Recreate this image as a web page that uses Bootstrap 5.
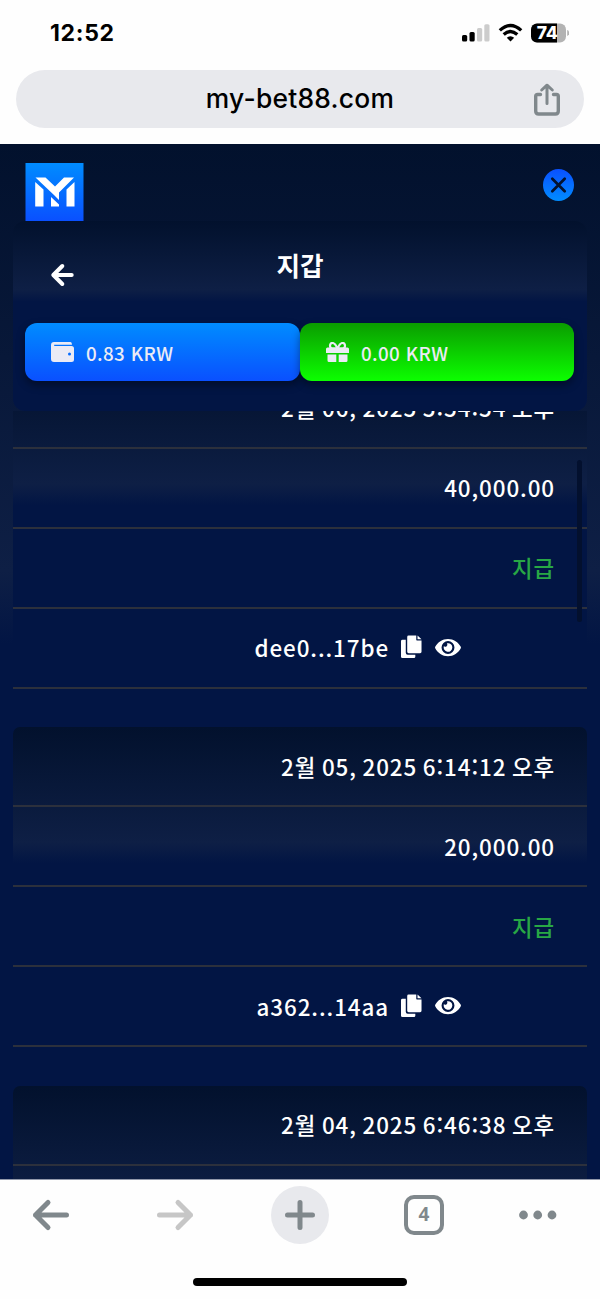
<!DOCTYPE html>
<html lang="ko">
<head>
<meta charset="utf-8">
<meta name="viewport" content="width=device-width, initial-scale=1">
<title>지갑</title>
<link href="https://cdn.jsdelivr.net/npm/bootstrap@5.3.0/dist/css/bootstrap.min.css" rel="stylesheet">
<style>
  body { width: 600px; height: 1299px; overflow: hidden; background: #fefefe; font-family: "Noto Sans CJK KR", sans-serif; color: #fff; }
  svg { display: block; flex: none; }
  .status-bar { height: 70px; padding: 0 31px 4px 50px; color: #000; font-family: Inter, sans-serif; }
  .clock { font-size: 23px; font-weight: 700; letter-spacing: .7px; line-height: 1; }
  .address { height: 58px; margin: 0 16px; background: #e8e9ed; color: #000; font: 500 26.4px/57px Inter, sans-serif; letter-spacing: .25px; }
  .address .share { right: 22px; top: 13px; }
  .site { height: 1035px; margin-top: 16px; background: linear-gradient(#02112d 0, #0e1f45 427px, #021544 500px); }
  .site-top { height: 77px; padding: 19px 26px 0 25px; }
  .close-icon { margin-top: 6px; }
  .panel { background: linear-gradient(#02112d 0, #0e1f45 36%, #021544 42.5%); }
  .wallet-head { height: 190px; margin: 0 13px; border-radius: 12px; padding: 0 12px; }
  .wallet-title { height: 102px; }
  .wallet-title .back { left: 25px; top: 42px; }
  .wallet-title h1 { font-size: 25.6px; font-weight: 700; line-height: 36px; padding-top: 26px; margin: 0; }
  .pill { height: 58px; border-radius: 12px; padding-left: 26px; gap: 12px; font-size: 18.8px; font-weight: 500; letter-spacing: .35px; color: #ebebf5; box-shadow: 0 4px 8px rgba(0,0,0,.4); }
  .pill span { padding-top: 2px; }
  .pill-main { width: 275px; background: linear-gradient(#008cff, #0a50ff); }
  .pill-bonus { width: 274px; background: linear-gradient(#0a9c00, #0cff00); }
  .records { height: 768px; margin: 0 13px; }
  .record { height: 320px; margin-bottom: 38.4px; border-radius: 7px 7px 0 0; font-size: 22.4px; font-weight: 500; letter-spacing: .9px; word-spacing: -1.5px; font-feature-settings: "calt" 1; }
  .record:first-child { margin-top: -42.2px; }
  .record > div { height: 80px; border-bottom: 2px solid #2c303c; padding: 0 32px 1px 0; line-height: 1; }
  .record .hash { padding-right: 126px; gap: 13px; }
  .hash span { margin-right: -1px; }
  .paid { color: #28a745; }
  .thumb { width: 5px; height: 162px; right: 5px; top: 49px; background: #03102e; }
  .tools { height: 120px; border-top: 1px solid #9299ab; }
  .tool-row { height: 69px; padding-left: 31px; gap: 75px; }
  .tool-row .forward { margin: 0 1px 0 9px; }
  .plus { width: 58px; height: 58px; background: #e8e9ed; }
  .tabs4 { width: 40px; height: 40px; border: 4px solid #80888c; border-radius: 10px; color: #80888c; font: 700 19px/1 "Noto Sans", sans-serif; }
  .home-bar { width: 214px; height: 8px; margin-top: 29px; background: #000; }
</style>
</head>
<body>
<svg width="0" height="0" class="position-absolute">
  <symbol id="copy" viewBox="0 0 22 24"><path fill="#fff" d="M8 0h8v4.500q0 .7.7.7H21.500V17q0 1.500-1.500 1.500H8Q6.500 18.500 6.500 17V1.500Q6.500 0 8 0zM17.300 0l4.200 4h-4.200zM1.500 4.500H5V18q0 2 2 2h8v2.100q0 1.400-1.400 1.400H1.500Q0 23.500 0 22.100V6q0-1.500 1.500-1.500z"/></symbol>
  <symbol id="eye" viewBox="0 0 576 512"><path fill="#fff" d="M572.500 241.400C518.300 135.600 410.900 64 288 64S57.700 135.600 3.500 241.400a32.400 32.400 0 0 0 0 29.200C57.700 376.400 165.100 448 288 448s230.300-71.600 284.500-177.400a32.400 32.400 0 0 0 0-29.200zM288 400a144 144 0 1 1 144-144 143.900 143.900 0 0 1-144 144zm0-240a95.300 95.300 0 0 0-25.300 3.800 47.900 47.900 0 0 1-66.900 66.900A95.800 95.800 0 1 0 288 160z"/></symbol>
</svg>

<header>
  <div class="status-bar d-flex align-items-center justify-content-between">
    <span class="clock">12:52</span>
    <svg width="107" height="20" viewBox="0 0 107 20">
      <rect y="12" width="5.200" height="6.500" rx="1.500"/><rect x="7.500" y="9" width="5.200" height="9.500" rx="1.500"/>
      <rect x="15" y="5" width="5.200" height="13.500" rx="1.500" fill="#ccc"/><rect x="22.300" y="1.300" width="5.200" height="17.200" rx="1.500" fill="#ccc"/>
      <g fill="none" stroke="#000" stroke-width="3.300"><path d="M37.800 7.400Q48.500-2.600 59.200 7.400"/><path d="M41.700 11.500Q48.500 5.400 55.300 11.500"/></g>
      <path d="M44.800 14.700Q48.500 11.700 52.200 14.700L48.500 18.400z"/>
      <clipPath id="batt"><rect x="69" y=".5" width="35" height="19" rx="6"/></clipPath>
      <g clip-path="url(#batt)"><rect x="69" width="35" height="20" fill="#b3b3b3"/><rect x="69" width="26" height="20"/></g>
      <path d="M105.200 7q2 .6 2 3t-2 3z" fill="#b3b3b3"/>
      <text x="74.800" y="16" fill="#fff" font-family="Inter" font-weight="800" font-size="17.500" letter-spacing="-.4">74</text>
    </svg>
  </div>
  <div class="address rounded-pill text-center position-relative">my-bet88.com
    <svg class="share position-absolute" width="30" height="34" viewBox="0 0 30 34" fill="none" stroke="#80888c" stroke-width="3.400" stroke-linecap="round" stroke-linejoin="round"><path d="M8.500 11.500H5.500Q3.700 11.500 3.700 13.300V28Q3.700 31 6.700 31H23.300Q26.300 31 26.300 28V13.300Q26.300 11.500 24.500 11.500H21.500"/><path stroke-width="3" d="M15 20.500V2.500M9.700 7 15 2.200 20.300 7"/></svg>
  </div>
</header>

<main class="site overflow-hidden">
  <div class="site-top d-flex justify-content-between align-items-start">
    <svg width="59" height="58" viewBox="-.5 0 59 58">
      <defs><linearGradient id="logo" x2="0" y2="1"><stop stop-color="#008cff"/><stop offset="1" stop-color="#0a50ff"/></linearGradient></defs>
      <rect width="58" height="58" fill="url(#logo)"/>
      <path fill="#fff" d="M10 14.500H20L29.500 23.500 38.500 14.500H48.500L33.500 29.500V37L29 32.500zM9.700 19 18 26.500V43.500H9.700zM49 19V43.500H41V26.500zM25.500 34 33.500 41.500V43.500H25.500z"/>
    </svg>
    <svg class="close-icon" width="31" height="32" viewBox="0 0 31 32">
      <defs><linearGradient id="close" x2="0" y2="1"><stop stop-color="#0a50ff"/><stop offset="1" stop-color="#008cff"/></linearGradient></defs>
      <ellipse cx="15.500" cy="16" rx="15.500" ry="16" fill="url(#close)"/><path d="M9.300 9.800 21.700 22.200M21.700 9.800 9.300 22.200" stroke="#03122f" stroke-width="2.700" stroke-linecap="round"/>
    </svg>
  </div>

  <section class="wallet-head panel">
    <div class="wallet-title position-relative text-center">
      <svg class="back position-absolute" width="26" height="24" viewBox="0 0 26 24" fill="none" stroke="#fff" stroke-width="4" stroke-linecap="round" stroke-linejoin="round"><path d="M21.700 12H3.500M12.300 3 3.300 12 12.300 21"/></svg>
      <h1>지갑</h1>
    </div>
    <div class="d-flex">
      <div class="pill pill-main d-flex align-items-center">
        <svg width="23" height="20" viewBox="0 0 23 20"><path fill="#ebebf5" fill-rule="evenodd" d="M3 0H19.500Q21 0 21 2.800H3.200V4H20.500Q23 4 23 6.500V17.500Q23 20 20.500 20H3Q0 20 0 17V3Q0 0 3 0zM18.500 10.500a1.500 1.500 0 1 0 0 3 1.500 1.500 0 0 0 0-3z"/></svg>
        <span>0.83 KRW</span>
      </div>
      <div class="pill pill-bonus d-flex align-items-center">
        <svg width="23" height="20" viewBox="0 0 23 20" fill="#ebebf5"><path d="M1.500 5.500H21.500Q23 5.500 23 7V11H0V7Q0 5.500 1.500 5.500zM1.500 12.500H10.300V20H3Q1.500 20 1.500 18.500zM12.700 12.500H21.500V18.500Q21.500 20 20 20H12.700z"/><path fill="none" stroke="#ebebf5" stroke-width="2.200" d="M11.500 6.500Q9 1 6.500 1 4 1 4 3.700 4 6.500 6.500 6.500H16.500Q19 6.500 19 3.700 19 1 16.500 1 14 1 11.500 6.500z"/></svg>
        <span>0.00 KRW</span>
      </div>
    </div>
  </section>

  <section class="records position-relative overflow-hidden">
    <article class="record panel">
      <div class="d-flex align-items-center justify-content-end">2월 06, 2025 5:54:54 오후</div>
      <div class="d-flex align-items-center justify-content-end">40,000.00</div>
      <div class="d-flex align-items-center justify-content-end paid">지급</div>
      <div class="hash d-flex align-items-center justify-content-end"><span>dee0...17be</span><svg width="21" height="24"><use href="#copy"/></svg><svg width="26" height="23"><use href="#eye"/></svg></div>
    </article>
    <article class="record panel">
      <div class="d-flex align-items-center justify-content-end">2월 05, 2025 6:14:12 오후</div>
      <div class="d-flex align-items-center justify-content-end">20,000.00</div>
      <div class="d-flex align-items-center justify-content-end paid">지급</div>
      <div class="hash d-flex align-items-center justify-content-end"><span>a362...14aa</span><svg width="21" height="24"><use href="#copy"/></svg><svg width="26" height="23"><use href="#eye"/></svg></div>
    </article>
    <article class="record panel">
      <div class="d-flex align-items-center justify-content-end">2월 04, 2025 6:46:38 오후</div>
      <div></div>
    </article>
    <span class="thumb position-absolute rounded-pill"></span>
  </section>
</main>

<footer class="tools">
  <div class="tool-row d-flex align-items-center">
    <svg width="40" height="34" viewBox="0 0 40 34" fill="none" stroke="#80888c" stroke-width="5" stroke-linecap="round" stroke-linejoin="round"><path d="M35.500 17H4.500M17 4.500 4.500 17 17 29.500"/></svg>
    <svg class="forward" width="40" height="34" viewBox="0 0 40 34" fill="none" stroke="#c6c6c6" stroke-width="5" stroke-linecap="round" stroke-linejoin="round"><path d="M4.500 17H35.500M23 4.500 35.500 17 23 29.500"/></svg>
    <div class="plus rounded-circle d-flex align-items-center justify-content-center flex-shrink-0"><svg width="32" height="32" viewBox="0 0 32 32" stroke="#80888c" stroke-width="5" stroke-linecap="round"><path d="M16 3.500V28.500M3.500 16H28.500"/></svg></div>
    <div class="tabs4 d-flex align-items-center justify-content-center flex-shrink-0">4</div>
    <svg width="38" height="10" viewBox="0 0 38 10" fill="#80888c"><circle cx="4.500" cy="5" r="4.400"/><circle cx="18.700" cy="5" r="4.400"/><circle cx="33" cy="5" r="4.400"/></svg>
  </div>
  <div class="home-bar rounded-pill mx-auto"></div>
</footer>
<script src="https://cdn.jsdelivr.net/npm/bootstrap@5.3.0/dist/js/bootstrap.bundle.min.js"></script>
</body>
</html>
